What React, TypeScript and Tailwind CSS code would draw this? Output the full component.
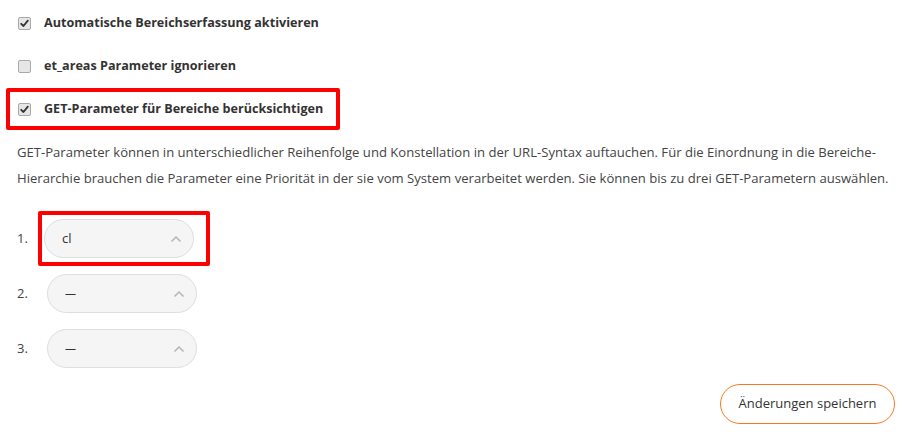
import React from "react";

function Check({ checked }: { checked: boolean }) {
  return (
    <span className="relative inline-flex h-[13px] w-[13px] shrink-0 items-center justify-center rounded-[2px] border border-[#a9a9a9] bg-[#e6e6e6]">
      {checked && (
        <svg width="9" height="9" viewBox="0 0 9 9" className="block">
          <path d="M1.2 4.8 L3.5 7 L7.8 1.6" fill="none" stroke="#333" strokeWidth="1.8" strokeLinecap="round" strokeLinejoin="round" />
        </svg>
      )}
    </span>
  );
}

function CheckRow({ checked, label, boxed }: { checked: boolean; label: string; boxed?: boolean }) {
  return (
    <div className="relative flex h-[43px] items-center pl-[18px]">
      <Check checked={checked} />
      <span className="ml-[13px] text-[12.6px] font-bold text-[#333]">{label}</span>
      {boxed && (
        <div className="pointer-events-none absolute left-[6px] top-0 h-[42px] w-[334px] rounded-[2px] border-[4px] border-[#ff0000]" />
      )}
    </div>
  );
}

function Select({ value, dash }: { value: string; dash?: boolean }) {
  return (
    <div className="flex h-[39px] w-[150px] items-center justify-between rounded-full border border-[#dedede] bg-[#f5f5f5] pl-[17px] pr-[11px]">
      <span className={dash ? "text-[11px] text-[#333]" : "text-[13px] text-[#333]"}>{value}</span>
      <svg width="12" height="8" viewBox="0 0 12 8">
        <path d="M1.5 6.5 L6 2 L10.5 6.5" fill="none" stroke="#b5b5b5" strokeWidth="1.5" />
      </svg>
    </div>
  );
}

function SelectRow({ n, value, boxed, dash }: { n: number; value: string; boxed?: boolean; dash?: boolean }) {
  return (
    <div className="flex h-[55px] items-center pl-[17px]">
      <span className="w-[27px] text-[13px] text-[#444]">{n}.</span>
      <div className={boxed ? "relative" : "relative ml-[3px]"}>
        <Select value={value} dash={dash} />
        {boxed && (
          <div className="pointer-events-none absolute left-[-6px] top-[-8px] h-[55px] w-[172px] rounded-[2px] border-[4px] border-[#ff0000]" />
        )}
      </div>
    </div>
  );
}

export default function App() {
  return (
    <div className="h-[444px] w-[907px] bg-white pt-[2px] font-['Open_Sans',sans-serif]">
      <CheckRow checked label="Automatische Bereichserfassung aktivieren" />
      <CheckRow checked={false} label="et_areas Parameter ignorieren" />
      <CheckRow checked label="GET-Parameter für Bereiche berücksichtigen" boxed />
      <p className="mt-[8px] pl-[17px] pr-[12px] text-[13.1px] leading-[26px] text-[#444]">
        GET-Parameter können in unterschiedlicher Reihenfolge und Konstellation in der URL-Syntax auftauchen. Für die Einordnung in die Bereiche-Hierarchie brauchen die Parameter eine Priorität in der sie vom System verarbeitet werden. Sie können bis zu drei GET-Parametern auswählen.
      </p>
      <div className="mt-[20px]">
        <SelectRow n={1} value="cl" boxed />
        <SelectRow n={2} value="—" dash />
        <SelectRow n={3} value="—" dash />
      </div>
      <div className="mt-[8px] flex justify-end pr-[12px]">
        <button className="h-[40px] w-[175px] rounded-full border-[1.5px] border-[#f47a20] bg-white text-[13px] font-medium text-[#333]">
          Änderungen speichern
        </button>
      </div>
    </div>
  );
}
